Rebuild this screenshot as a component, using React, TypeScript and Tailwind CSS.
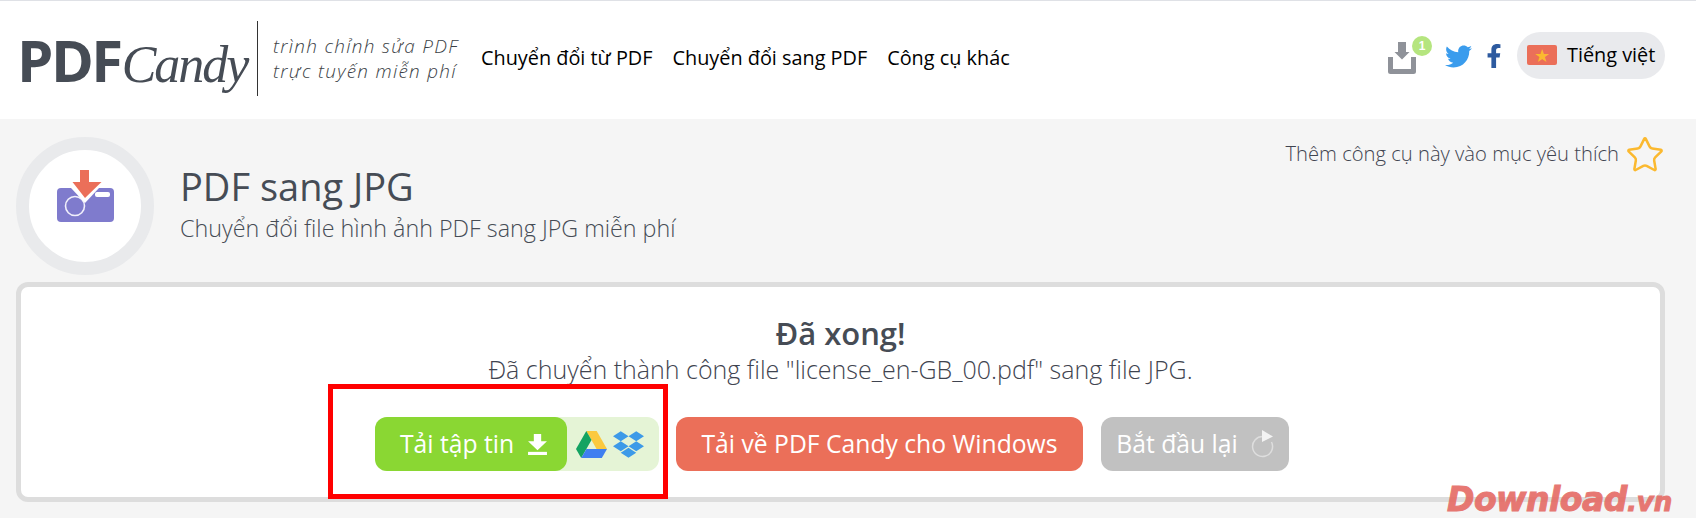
import React from 'react';
import { FaDropbox, FaFacebookF, FaTwitter } from 'react-icons/fa';
import { Star } from 'lucide-react';

const OPEN_SANS = "font-['Open_Sans',sans-serif]";

// ─── Small drawings ─────────────────────────────────────────

const TrayIcon = () => (
  <svg width="28" height="32" viewBox="0 0 28 32">
    <path d="M10 0h8v10h3.500L14 17.500 6.500 10H10z" fill="#8f9299" />
    <path d="M2.500 15v14.500h23V15" fill="none" stroke="#8f9299" strokeWidth="5" strokeLinejoin="round" />
  </svg>
);

const PdfToJpgIcon = () => (
  <svg className="mb-[18px] ml-[2px]" width="60" height="56" viewBox="0 0 60 56">
    <rect x="1" y="19" width="57" height="34" rx="4" fill="#7f7bcd" />
    <rect x="39" y="23" width="15" height="5" rx="2" fill="#fff" />
    <circle cx="19" cy="37" r="9.500" fill="#7f7bcd" stroke="#f1f0fb" strokeWidth="1.600" />
    <path d="M15 19l14 15 14-15z" fill="#fff" />
    <path d="M24 1h9v12h12.500L29 29 16.500 13H24z" fill="#eb6f59" />
  </svg>
);

const DriveIcon = () => (
  <svg width="31" height="27" viewBox="0 0 31 27">
    <path d="M10.300 0h10.400l10.300 18H20.600z" fill="#fbc93f" />
    <path d="M10.300 0l5.200 9L5.200 27 0 18z" fill="#14a362" />
    <path d="M5.200 27l5.200-9H31l-5.200 9z" fill="#3f7ff0" />
  </svg>
);

const RestartIcon = () => (
  <svg width="24" height="28" viewBox="0 0 24 28">
    <path d="M13 6.500A10 10 0 1 0 21.500 12" fill="none" stroke="#dedede" strokeWidth="1.500" />
    <path d="M12 0l11 6.500L12 12z" fill="#f3f3f3" />
  </svg>
);

// ─── Header ─────────────────────────────────────────────────

const NAV_ITEMS = ['Chuyển đổi từ PDF', 'Chuyển đổi sang PDF', 'Công cụ khác'];

const Header: React.FC = () => (
  <header className="flex h-[118px] items-center bg-white pb-[4px] pl-[17px] pr-[31px]">
    <div className="flex w-[240px] items-baseline pt-[6px] text-[#464c55]">
      <span className="font-['Open_Sans',sans-serif] text-[58px] font-bold leading-none tracking-[-2.5px]">PDF</span>
      <span className="ml-[1px] font-['Liberation_Serif',serif] text-[52px] italic leading-none tracking-[-2px]">Candy</span>
    </div>
    <div className="h-[75px] w-px bg-[#333]" />
    <div className={`${OPEN_SANS} ml-[15px] mt-[2px] w-[208px] text-[18.900px] font-light italic leading-[25px] tracking-[1.300px] text-[#3b3f46]`}>
      <div className="whitespace-nowrap">trình chỉnh sửa PDF</div>
      <div className="whitespace-nowrap">trực tuyến miễn phí</div>
    </div>
    <nav className={`${OPEN_SANS} flex gap-[20px] text-[19.850px] text-black`}>
      {NAV_ITEMS.map((item) => (
        <span key={item}>{item}</span>
      ))}
    </nav>
    <div className="mb-[6px] ml-auto flex items-center">
      <div className="relative mt-[6px] h-[32px] w-[28px]">
        <TrayIcon />
        <span className="absolute -right-[16px] -top-[6px] flex h-5 w-5 items-center justify-center rounded-full bg-[#b5e57f] font-['Liberation_Sans',sans-serif] text-[12px] font-bold text-white">
          1
        </span>
      </div>
      <FaTwitter className="ml-[29px] mt-[2px] text-[#3a9ced]" size={27} />
      <FaFacebookF className="ml-[10px] mt-[2px] text-[#2d5a9f]" size={24} />
      <div className={`${OPEN_SANS} ml-[11px] flex h-[47px] w-[148px] items-center rounded-full bg-[#e9eaed] pl-[10px] text-[19.850px] text-black`}>
        <span className="flex h-5 w-[30px] items-center justify-center rounded-[2px] bg-[#eb6f59] text-[18px] leading-none text-[#fbb92f]">★</span>
        <span className="ml-[10px]">Tiếng việt</span>
      </div>
    </div>
  </header>
);

// ─── Page ───────────────────────────────────────────────────

export default function App() {
  return (
    <div className={`${OPEN_SANS} relative h-[518px] w-[1696px] overflow-hidden bg-[#f5f5f5]`}>
      <div className="h-px bg-[#dfe1e6]" />
      <Header />

      <section className="flex h-[163px] pl-[16px] pr-[31px] pt-[18px]">
        <div className="flex h-[138px] w-[138px] items-center justify-center rounded-full border-[13px] border-[#e9eaec] bg-white">
          <PdfToJpgIcon />
        </div>
        <div className="ml-[26px] pt-[24px]">
          <h1 className="text-[38px] font-normal leading-[50px] text-[#464c55]">PDF sang JPG</h1>
          <p className="mt-[2px] text-[23.300px] font-light leading-[30px] text-[#464c55]">Chuyển đổi file hình ảnh PDF sang JPG miễn phí</p>
        </div>
        <div className="ml-auto flex h-[36px] items-center">
          <span className="mb-[3px] text-[20.200px] font-light text-[#3f4450]">Thêm công cụ này vào mục yêu thích</span>
          <Star className="ml-[6px]" size={40} color="#fbb92f" strokeWidth={1.500} />
        </div>
      </section>

      <main className="ml-[16px] mr-[31px] flex h-[220px] flex-col items-center rounded-[12px] border-[5px] border-[#dddddd] bg-white pt-[28px]">
        <h2 className="text-[31px] font-semibold leading-[36px] text-[#464c55]">Đã xong!</h2>
        <p className="mt-[1px] text-[25px] font-light leading-[34px] text-[#3f4450]">
          Đã chuyển thành công file "license_en-GB_00.pdf" sang file JPG.
        </p>
        <div className="ml-[354px] mt-[31px] flex h-[54px] self-start text-[24.700px] text-white">
          <div className="flex w-[284px] rounded-[12px] bg-[#e5f4d6]">
            <div className="flex w-[192px] items-center rounded-[12px] bg-[#8ad733] pl-[25px]">
              <span>Tải tập tin</span>
              <svg className="ml-[13px]" width="21" height="21" viewBox="0 0 20 20">
                <path d="M6.500 0h7v7H19l-9 8.500L1 7h5.500z" fill="#fff" />
                <rect y="17" x="1" width="18" height="3" fill="#fff" />
              </svg>
            </div>
            <div className="flex items-center pl-[9px]">
              <DriveIcon />
              <FaDropbox className="ml-[6px] text-[#3d9ae8]" size={31} />
            </div>
          </div>
          <div className="ml-[17px] flex w-[407px] items-center justify-center whitespace-nowrap rounded-[12px] bg-[#eb6f59]">
            Tải về PDF Candy cho Windows
          </div>
          <div className="ml-[18px] flex w-[188px] items-center justify-center whitespace-nowrap rounded-[12px] bg-[#c1c1c1]">
            <span>Bắt đầu lại</span>
            <span className="ml-[12px]"><RestartIcon /></span>
          </div>
        </div>
      </main>

      {/* annotation and watermark sit on top of the captured page */}
      <div className="absolute left-[328px] top-[384px] h-[115px] w-[340px] border-[5px] border-[#ff0000]" />
      <div className="absolute left-[1447px] top-[482px] whitespace-nowrap font-['DejaVu_Sans',sans-serif] text-[33px] font-bold italic leading-[36px] tracking-[-0.500px] text-[#e56a64] opacity-90 [-webkit-text-stroke:1px_#e56a64]">
        Download<span className="text-[26px] tracking-[0px]">.vn</span>
      </div>
    </div>
  );
}
